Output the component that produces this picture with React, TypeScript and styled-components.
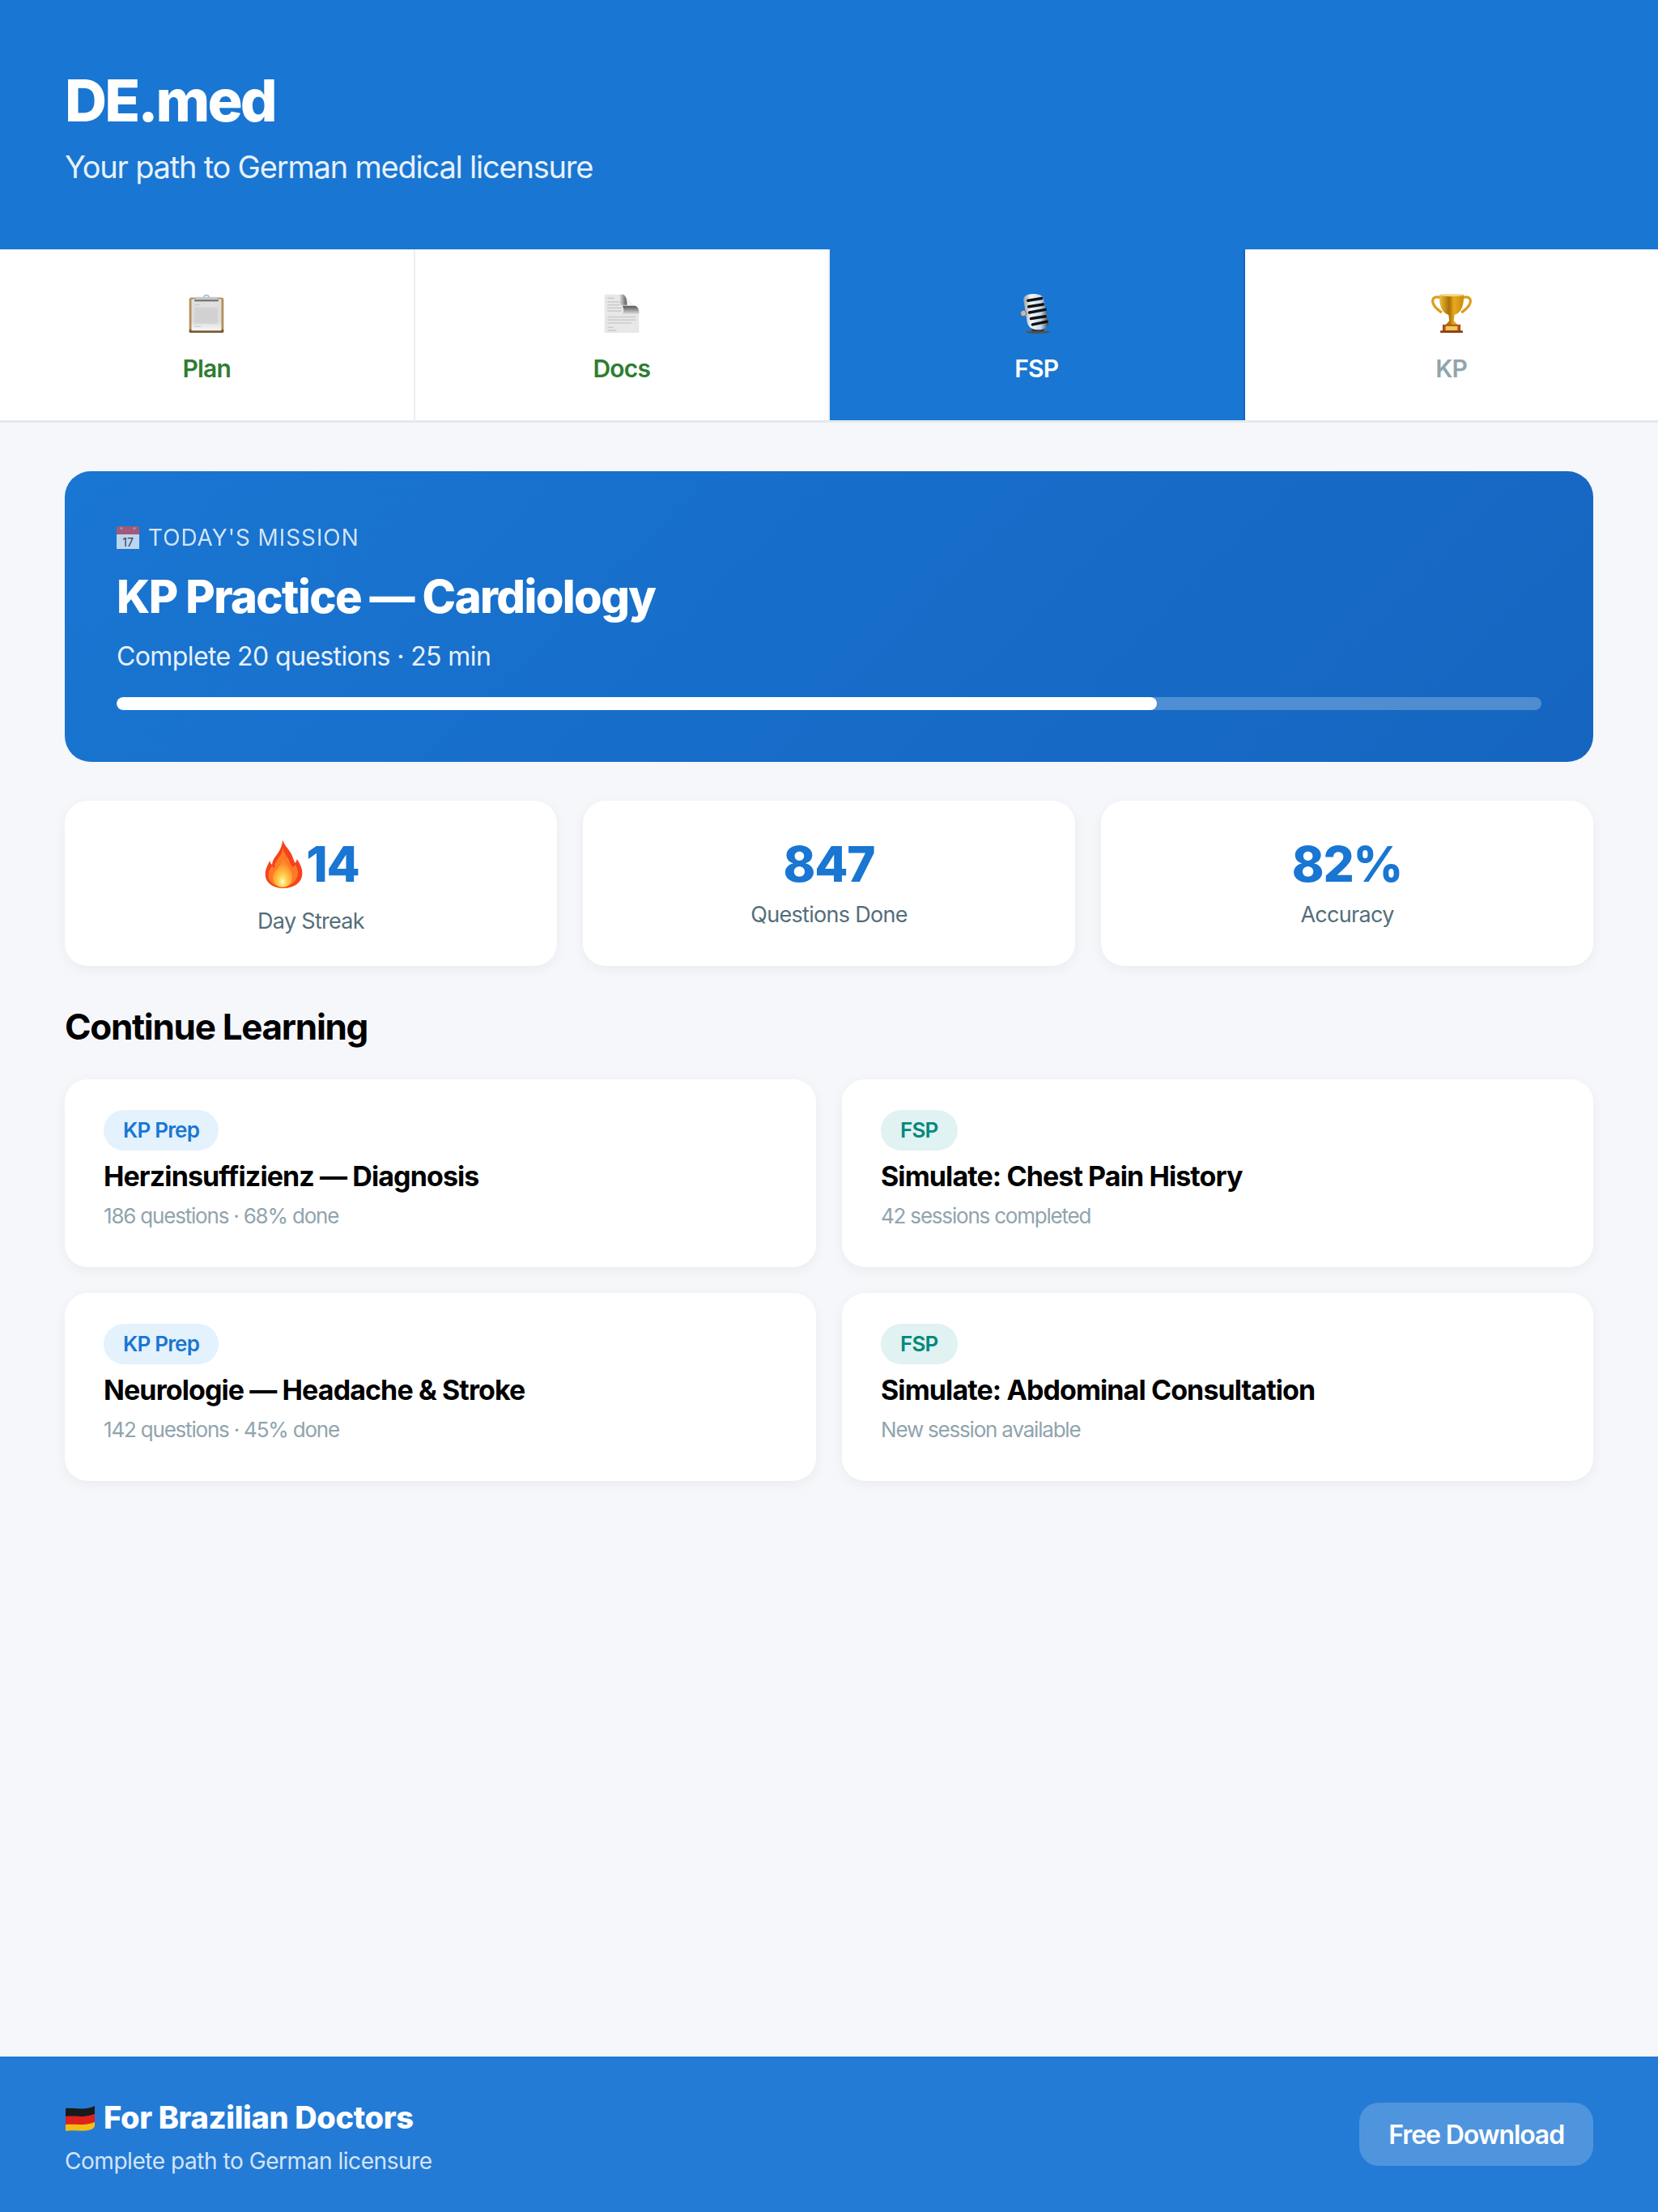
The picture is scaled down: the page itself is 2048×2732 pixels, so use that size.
import React from "react";
import styled, { createGlobalStyle } from "styled-components";

const GlobalStyle = createGlobalStyle`
  * { box-sizing: border-box; }
  html, body { margin: 0; padding: 0; }
  body {
    background: #f5f7fb;
    color: #000;
    font-family: Inter, "Liberation Sans", sans-serif;
  }
`;

const Page = styled.div`
  display: flex;
  flex-direction: column;
  min-height: 2732px;
`;

const Header = styled.header`
  background: #1976d2;
  color: #fff;
  height: 308px;
  padding: 80px 80px 0;
`;

const Logo = styled.h1`
  font-size: 72px;
  font-weight: 800;
  letter-spacing: -2.9px;
  line-height: 88px;
  margin: 0 0 16px;
`;

const Tagline = styled.p`
  font-size: 38px;
  letter-spacing: -1.2px;
  line-height: 44px;
  margin: 0;
  opacity: 0.9;
`;

const Nav = styled.nav`
  background: #fff;
  border-bottom: 3px solid #e3eaf0;
  display: flex;
  height: 214px;
`;

const Tab = styled.div<{ $active?: boolean; $muted?: boolean }>`
  align-items: center;
  background: ${(p) => (p.$active ? "#1976d2" : "transparent")};
  border-right: 2px solid ${(p) => (p.$active ? "#1565c0" : "#eceff1")};
  color: ${(p) => (p.$active ? "#fff" : p.$muted ? "#90a4ae" : "#2e7d32")};
  display: flex;
  flex: 1 1 0;
  flex-direction: column;
  font-size: 30px;
  font-weight: 600;
  gap: 25px;
  letter-spacing: -0.8px;
  padding-top: 54px;

  &:last-child {
    border-right: none;
  }
`;

const TabIcon = styled.svg`
  display: block;
  height: 50px;
  width: 50px;
`;

const TabLabel = styled.span`
  line-height: 36px;
`;

const Main = styled.main`
  display: flex;
  flex: 1;
  flex-direction: column;
  padding: 60px 80px 0;
`;

const Mission = styled.section`
  background: linear-gradient(135deg, #1976d2, #1565c0);
  border-radius: 32px;
  color: #fff;
  height: 359px;
  margin-bottom: 48px;
  padding: 65px 64px 0;
`;

const MissionLabel = styled.div`
  align-items: center;
  display: flex;
  font-size: 28px;
  gap: 11px;
  letter-spacing: 0.9px;
  line-height: 34px;
  margin-bottom: 22px;
  opacity: 0.8;
`;

const CalendarIcon = styled.svg`
  height: 28px;
  width: 28px;
`;

const MissionTitle = styled.h2`
  font-size: 56px;
  font-weight: 800;
  letter-spacing: -1.6px;
  line-height: 68px;
  margin: 0 0 19px;
`;

const MissionMeta = styled.p`
  font-size: 32px;
  letter-spacing: -0.6px;
  line-height: 42px;
  margin: 0 0 29px;
  opacity: 0.9;
`;

const Track = styled.div`
  background: rgba(255, 255, 255, 0.25);
  border-radius: 8px;
  height: 16px;
  overflow: hidden;
`;

const Fill = styled.div<{ $percent: number }>`
  background: #fff;
  border-radius: 8px;
  height: 100%;
  width: ${(p) => p.$percent}%;
`;

const Stats = styled.div`
  display: grid;
  gap: 32px;
  grid-template-columns: repeat(3, 1fr);
  margin-bottom: 48px;
`;

const StatCard = styled.div`
  background: #fff;
  border-radius: 28px;
  box-shadow: 0 4px 16px rgba(0, 0, 0, 0.05);
  height: 204px;
  padding: 42px 0 0;
  text-align: center;
`;

const StatValue = styled.div`
  align-items: center;
  color: #1976d2;
  display: flex;
  font-size: 60px;
  font-weight: 800;
  justify-content: center;
  letter-spacing: -1.2px;
  line-height: 72px;
`;

const FlameIcon = styled.svg`
  height: 60px;
  margin-right: 2px;
  width: 52px;
`;

const StatLabel = styled.div<{ $shifted?: boolean }>`
  color: #546e7a;
  font-size: 27px;
  letter-spacing: -0.7px;
  line-height: 34px;
  margin-top: ${(p) => (p.$shifted ? "18px" : "9.5px")};
`;

const SectionTitle = styled.h3`
  font-size: 44px;
  font-weight: 700;
  letter-spacing: -1.3px;
  line-height: 54px;
  margin: 0 0 38px;
`;

const CourseGrid = styled.div`
  display: grid;
  gap: 32px;
  grid-template-columns: repeat(2, 1fr);
`;

const CourseCard = styled.article`
  background: #fff;
  border-radius: 28px;
  box-shadow: 0 4px 16px rgba(0, 0, 0, 0.05);
  height: 232px;
  padding: 38px 48px 0;
`;

const Badge = styled.span<{ $fsp?: boolean }>`
  background: ${(p) => (p.$fsp ? "#e0f2f1" : "#e3f2fd")};
  border-radius: 999px;
  color: ${(p) => (p.$fsp ? "#00897b" : "#1976d2")};
  display: inline-block;
  font-size: 26px;
  font-weight: 600;
  letter-spacing: -0.8px;
  line-height: 32px;
  padding: 9px 24px;
`;

const CourseTitle = styled.h4`
  font-size: 34px;
  font-weight: 700;
  letter-spacing: -0.9px;
  line-height: 42px;
  margin: 11px 0 12px;
`;

const CourseMeta = styled.p`
  color: #90a4ae;
  font-size: 26px;
  letter-spacing: -1.2px;
  line-height: 32px;
  margin: 0;
`;

const Footer = styled.footer`
  align-items: center;
  background: #237bd6;
  color: #fff;
  display: flex;
  height: 192px;
  justify-content: space-between;
  padding: 0 80px;
`;

const FooterCopy = styled.div`
  padding-top: 6px;
`;

const FooterTitle = styled.div`
  align-items: center;
  display: flex;
  font-size: 38px;
  font-weight: 800;
  gap: 10px;
  letter-spacing: -0.35px;
  line-height: 46px;
  margin-bottom: 13px;
`;

const FlagIcon = styled.svg`
  height: 38px;
  width: 38px;
`;

const FooterText = styled.div`
  font-size: 28px;
  letter-spacing: -0.45px;
  line-height: 36px;
  opacity: 0.8;
`;

const DownloadButton = styled.button`
  background: rgba(255, 255, 255, 0.2);
  border: none;
  border-radius: 24px;
  color: #fff;
  font-family: inherit;
  font-size: 32px;
  font-weight: 600;
  height: 78px;
  letter-spacing: -1.1px;
  padding: 0 36px;
`;

const ClipboardArt = () => (
  <TabIcon viewBox="0 0 54 54">
    <defs>
      <linearGradient id="clipPaper" x1="0" y1="0" x2="0" y2="1">
        <stop offset="0" stopColor="#e0e0e0" />
        <stop offset="0.7" stopColor="#dcdcdc" />
        <stop offset="1" stopColor="#f7f7f7" />
      </linearGradient>
    </defs>
    <rect x="4" y="6" width="46" height="47" rx="3" fill="#b58f56" />
    <rect x="4" y="48" width="46" height="5" rx="2" fill="#7a5a30" />
    <rect x="7" y="8" width="40" height="42" fill="url(#clipPaper)" />
    <path d="M13 5h28l2 6H11z" fill="#c2c7cc" />
    <rect x="11" y="9" width="32" height="2" fill="#70695f" />
    <path d="M23 5c0-4 8-4 8 0h-2c0-2-4-2-4 0z" fill="#9fb0c4" />
    <g fill="#c4c4c4">
      <rect x="11" y="15" width="7" height="1" />
      <rect x="11" y="19" width="31" height="22" opacity="0.45" />
      <rect x="11" y="44" width="9" height="1" />
    </g>
  </TabIcon>
);

const DocumentArt = () => (
  <TabIcon viewBox="0 0 54 54">
    <defs>
      <linearGradient id="docCurl" x1="0" y1="0" x2="1" y2="0">
        <stop offset="0" stopColor="#e0e0e0" />
        <stop offset="1" stopColor="#5a5a5a" />
      </linearGradient>
      <linearGradient id="docFold" x1="0" y1="0" x2="0" y2="1">
        <stop offset="0" stopColor="#555" />
        <stop offset="1" stopColor="#dedede" />
      </linearGradient>
    </defs>
    <path d="M4 2h24l22 21v30H4z" fill="#e8e8e8" />
    <path d="M30 2l20 21H34z" fill="#f4f4f4" />
    <path d="M24 2h5c4 2 5 8 5 14H24c1-4 1-10 0-14z" fill="url(#docCurl)" />
    <path d="M28 17h17c3 1 5 4 5 8v3H28c2-3 2-7 0-11z" fill="url(#docFold)" />
    <g fill="#cacaca">
      <rect x="8" y="6" width="9" height="1.6" />
      <rect x="8" y="11" width="16" height="1.6" />
      <rect x="8" y="15" width="16" height="1.6" />
      <rect x="8" y="19" width="19" height="1.6" />
      <rect x="8" y="23" width="19" height="1.6" />
      <rect x="8" y="31" width="38" height="1.6" />
      <rect x="8" y="35" width="38" height="1.6" />
      <rect x="8" y="39" width="32" height="1.6" />
      <rect x="8" y="45" width="8" height="1.6" />
      <rect x="8" y="49" width="12" height="1.6" />
    </g>
  </TabIcon>
);

const MicrophoneArt = () => (
  <TabIcon viewBox="0 0 54 54">
    <defs>
      <linearGradient id="micBody" x1="0" y1="0" x2="1" y2="0">
        <stop offset="0" stopColor="#9a9fa6" />
        <stop offset="0.3" stopColor="#f4f8fc" />
        <stop offset="0.7" stopColor="#c5d9ef" />
        <stop offset="1" stopColor="#44484d" />
      </linearGradient>
    </defs>
    <ellipse cx="29" cy="52" rx="16" ry="2" fill="#4e5358" />
    <rect x="21" y="46" width="16" height="5" fill="#33373b" />
    <path d="M10 9c0-5 5-8 13-8s13 2 14 8l6 30c1 6-5 10-13 10s-13-3-15-9z" fill="url(#micBody)" />
    <circle cx="10" cy="27" r="4" fill="#b9bdc2" stroke="#66696d" />
    <g stroke="#111" strokeWidth="3.8" strokeLinecap="round">
      <path d="M16 10l18-3" />
      <path d="M17 18l19-3" />
      <path d="M18 26l21-4" />
      <path d="M20 34l19-3" />
      <path d="M22 42l19-4" />
    </g>
  </TabIcon>
);

const TrophyArt = () => (
  <TabIcon viewBox="0 0 54 54">
    <defs>
      <linearGradient id="cupGold" x1="0" y1="0" x2="1" y2="0">
        <stop offset="0" stopColor="#f0bd3a" />
        <stop offset="0.4" stopColor="#a96f05" />
        <stop offset="0.6" stopColor="#e7a91e" />
        <stop offset="1" stopColor="#c98a0c" />
      </linearGradient>
    </defs>
    <path
      d="M12 6C3 3 0 9 3 15c2 5 7 8 11 11M42 6c9-3 12 3 9 9-2 5-7 8-11 11"
      fill="none"
      stroke="#d99f1e"
      strokeWidth="3.5"
    />
    <path d="M11 2h32c1 14-3 24-12 27l-1 8 5 5H19l5-5-1-8C14 26 10 16 11 2z" fill="url(#cupGold)" />
    <ellipse cx="27" cy="3" rx="16" ry="1.5" fill="#f6d27a" />
    <rect x="15" y="42" width="24" height="9" fill="#a9521a" />
    <rect x="19" y="44" width="16" height="6" fill="#f2c758" />
    <rect x="12" y="50" width="30" height="3" fill="#8e3f12" />
  </TabIcon>
);

const CalendarArt = () => (
  <CalendarIcon viewBox="0 0 28 28">
    <rect width="28" height="28" fill="#e6eef6" />
    <rect width="28" height="10" fill="#c8505f" />
    <circle cx="6" cy="2.5" r="1.6" fill="#7fb6e8" />
    <circle cx="22" cy="2.5" r="1.6" fill="#7fb6e8" />
    <text x="14" y="25" fontSize="14" textAnchor="middle" fill="#333" letterSpacing="0" fontFamily="Inter, sans-serif">
      17
    </text>
  </CalendarIcon>
);

const FlameArt = () => (
  <FlameIcon viewBox="0 0 56 60" preserveAspectRatio="none">
    <defs>
      <radialGradient id="flameCore" cx="0.5" cy="0.8" r="0.6">
        <stop offset="0" stopColor="#fffbd0" />
        <stop offset="0.35" stopColor="#ffd24a" />
        <stop offset="1" stopColor="#ff8a2b" />
      </radialGradient>
    </defs>
    <path
      d="M27 0c2 8 11 13 14 23 1 3 2 5 3 6 1-2 2-4 2-5 5 7 8 13 7 20-1 9-11 16-25 16S4 53 4 43c0-7 3-11 6-17 1 2 1 4 3 5 0-3 2-8 6-12 4-5 8-12 8-19z"
      fill="#f5431c"
    />
    <path
      d="M27 10c2 8 8 12 11 21 1 2 2 3 3 3l3-3c3 5 4 9 3 13-2 8-9 14-20 14S8 52 8 44c0-5 3-9 5-12 1 2 2 3 3 3 0-5 3-9 6-13 3-3 5-8 5-12z"
      fill="#ff7a26"
    />
    <path
      d="M28 22c1 7 12 14 12 25 0 7-6 12-13 12s-13-5-13-12c0-9 13-15 14-25z"
      fill="url(#flameCore)"
    />
  </FlameIcon>
);

const FlagArt = () => (
  <FlagIcon viewBox="0 0 38 38">
    <path d="M1 8c12-1 24 3 36-3v10C25 20 13 17 1 18z" fill="#1a1a1a" />
    <path d="M1 18c12-1 24 2 36-3v10c-12 5-24 2-36 3z" fill="#e0201b" />
    <path d="M1 28c12-1 24 2 36-3v5c-2 4-5 4-7 5-10 2-19-1-29 1z" fill="#f4bd12" />
  </FlagIcon>
);

const tabs = [
  { label: "Plan", art: <ClipboardArt /> },
  { label: "Docs", art: <DocumentArt /> },
  { label: "FSP", art: <MicrophoneArt />, active: true },
  { label: "KP", art: <TrophyArt />, muted: true },
];

const courses = [
  { tag: "KP Prep", title: "Herzinsuffizienz — Diagnosis", meta: "186 questions · 68% done" },
  { tag: "FSP", title: "Simulate: Chest Pain History", meta: "42 sessions completed", fsp: true },
  { tag: "KP Prep", title: "Neurologie — Headache & Stroke", meta: "142 questions · 45% done" },
  { tag: "FSP", title: "Simulate: Abdominal Consultation", meta: "New session available", fsp: true },
];

const App = () => (
  <Page>
    <GlobalStyle />
    <Header>
      <Logo>DE.med</Logo>
      <Tagline>Your path to German medical licensure</Tagline>
    </Header>
    <Nav>
      {tabs.map((tab) => (
        <Tab key={tab.label} $active={tab.active} $muted={tab.muted}>
          {tab.art}
          <TabLabel>{tab.label}</TabLabel>
        </Tab>
      ))}
    </Nav>
    <Main>
      <Mission>
        <MissionLabel>
          <CalendarArt />
          TODAY'S MISSION
        </MissionLabel>
        <MissionTitle>KP Practice — Cardiology</MissionTitle>
        <MissionMeta>Complete 20 questions · 25 min</MissionMeta>
        <Track>
          <Fill $percent={73} />
        </Track>
      </Mission>
      <Stats>
        <StatCard>
          <StatValue>
            <FlameArt />
            14
          </StatValue>
          <StatLabel $shifted>Day Streak</StatLabel>
        </StatCard>
        <StatCard>
          <StatValue>847</StatValue>
          <StatLabel>Questions Done</StatLabel>
        </StatCard>
        <StatCard>
          <StatValue>82%</StatValue>
          <StatLabel>Accuracy</StatLabel>
        </StatCard>
      </Stats>
      <SectionTitle>Continue Learning</SectionTitle>
      <CourseGrid>
        {courses.map((course) => (
          <CourseCard key={course.title}>
            <Badge $fsp={course.fsp}>{course.tag}</Badge>
            <CourseTitle>{course.title}</CourseTitle>
            <CourseMeta>{course.meta}</CourseMeta>
          </CourseCard>
        ))}
      </CourseGrid>
    </Main>
    <Footer>
      <FooterCopy>
        <FooterTitle>
          <FlagArt />
          For Brazilian Doctors
        </FooterTitle>
        <FooterText>Complete path to German licensure</FooterText>
      </FooterCopy>
      <DownloadButton>Free Download</DownloadButton>
    </Footer>
  </Page>
);

export default App;
